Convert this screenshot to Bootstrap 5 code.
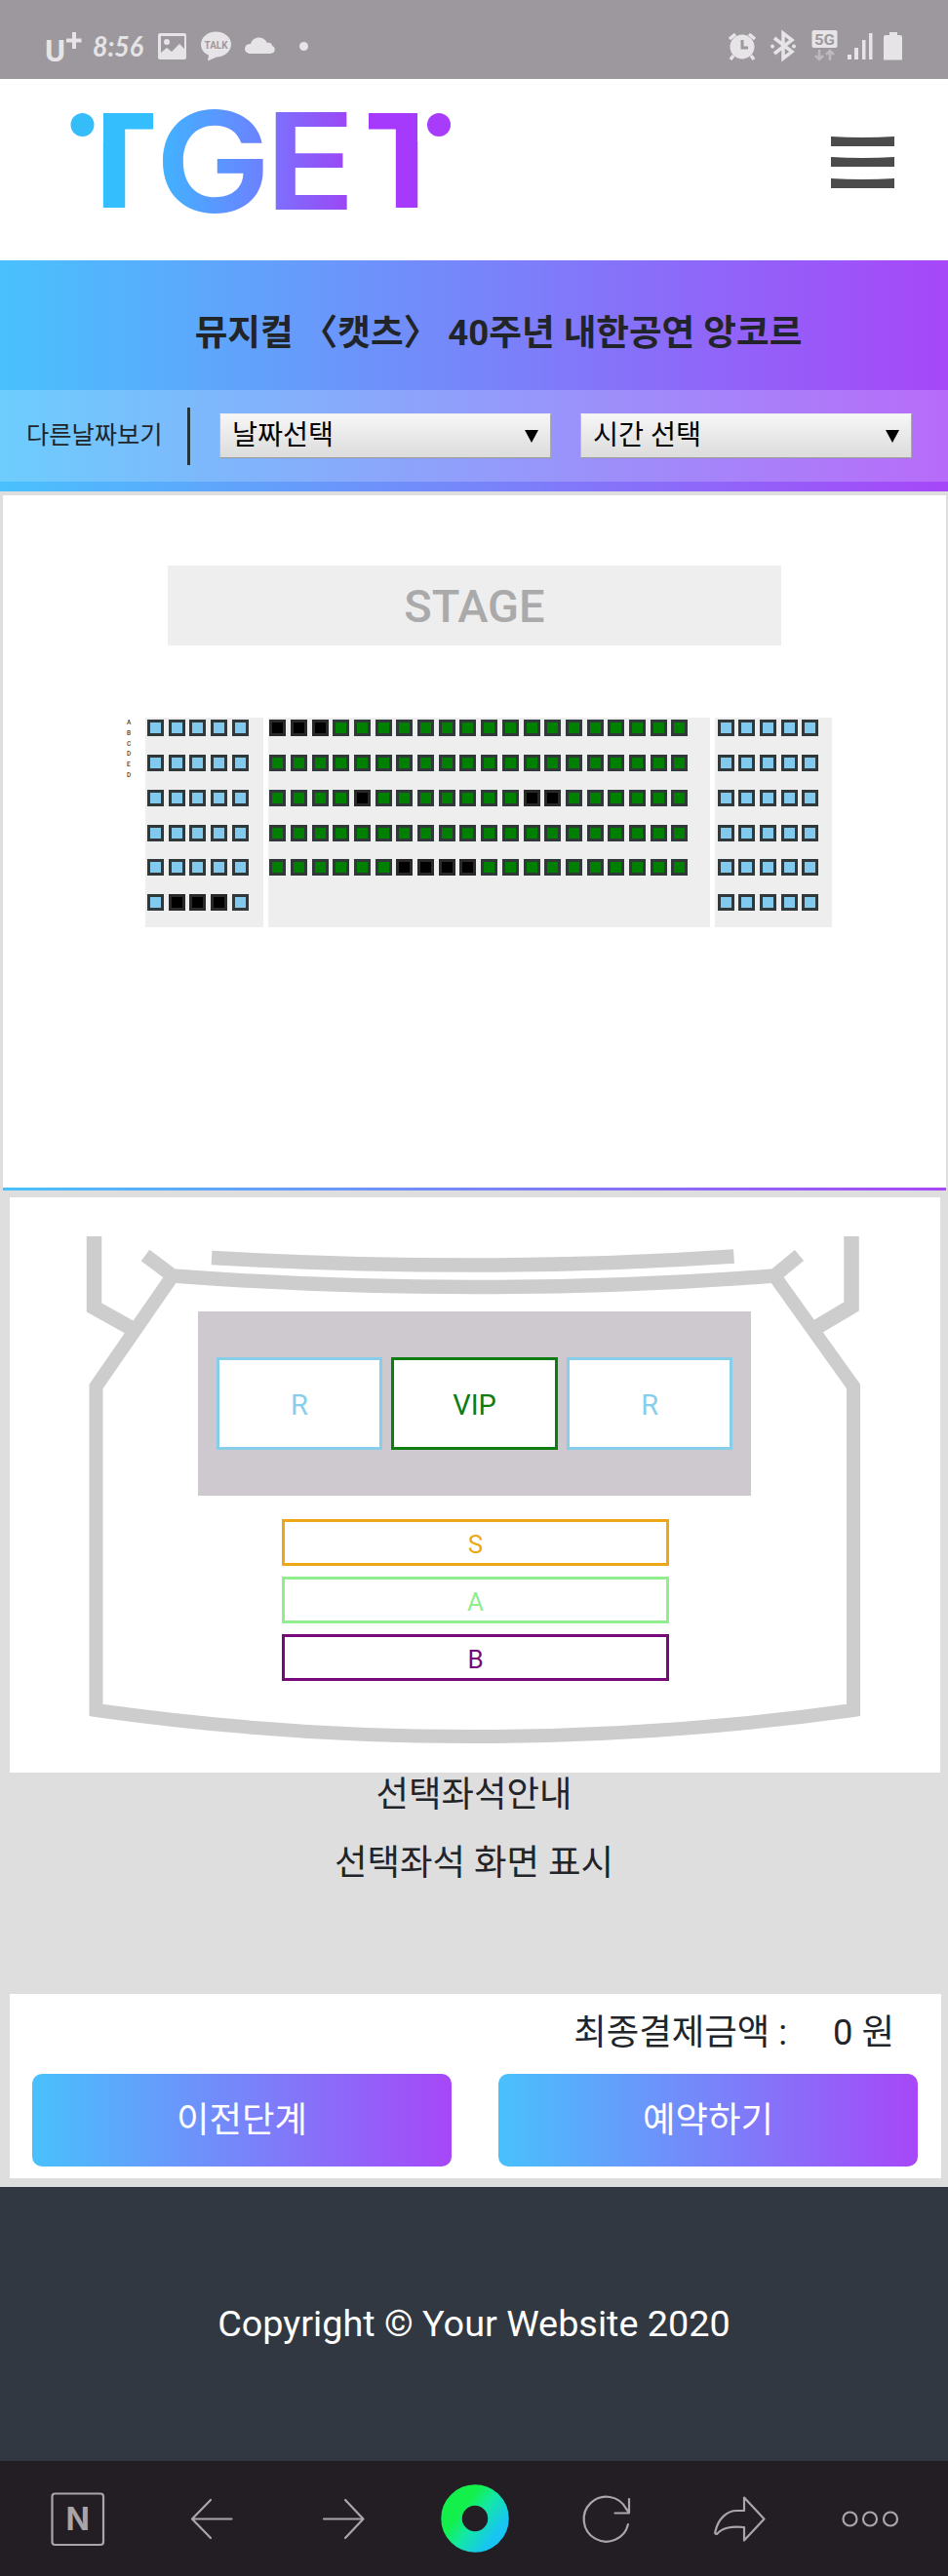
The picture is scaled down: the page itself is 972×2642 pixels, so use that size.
<!DOCTYPE html>
<html lang="ko">
<head>
<meta charset="utf-8">
<meta name="viewport" content="width=device-width, initial-scale=1">
<title>TGET</title>
<link href="https://cdn.jsdelivr.net/npm/bootstrap@5.3.0/dist/css/bootstrap.min.css" rel="stylesheet">
<style>
:root{--tget:linear-gradient(to right,#49c1fd,#7785fa 50%,#a747f8)}
body{font-family:Roboto,"Noto Sans CJK KR",sans-serif;font-size:36.4px;line-height:1;color:#212529;background:#dedede}
svg{display:block}
.status-bar{height:81px;background:#9d989d}
.site-header{height:186px;padding:0 55px 0 70px;background:#fff}
.menu-btn{margin-top:59px;height:53px}
.hero{height:237px;background:var(--tget);padding-bottom:10px}
.hero-title{height:133px;padding:16px 0 0 50px;font-size:36.6px;font-weight:700;margin:0}
.filters{height:94px;background:rgba(255,255,255,.2);padding-left:27px}
.filters .other{width:167.5px;height:59px;font-size:25.3px;border-right:3px solid #24343c;margin-right:30.5px}
.picker{width:340px;height:46px;margin-right:30px;padding:0 12px;font-size:28.3px;color:#000;border:1px solid #999;border-color:#eee #aaa #999 #bbb;background:linear-gradient(#f6f6f6,#dcdcdc)}
.seat-panel{margin:4px 2px 0 3px;height:713px;background:#fff;padding-top:72px;border-bottom:3px solid;border-image:var(--tget) 1}
.stage{width:629px;height:82px;margin-left:169px;padding-top:1px;background:#eee;color:#aaa;font-size:47px;font-weight:500}
.seating{margin:74px 0 0 127px}
.row-names{width:18.5px;font-size:6.5px;line-height:10.8px;color:#444;font-weight:500}
.block{display:grid;align-content:start;height:214.5px;background:#eee;grid-auto-rows:35.75px;padding:2.3px 0 0 2.5px}
.block.side{width:121.5px;grid-template-columns:repeat(5,21.7px)}
.block.side:last-child{width:120px}
.block.mid{width:453px;grid-template-columns:repeat(20,21.7px);margin:0 5px;padding-left:1.3px}
.block i{width:17px;height:17px;border:3px solid #30383a;background:#81caee}
.block.mid i{background:#008000}
.block i.sold{background:#000;border-color:#292929}
.hall{margin:7px 8px 0 10px;height:590px;background:#fff;position:relative}
.hall>svg{position:absolute;inset:0}
.hall-zones{position:relative;padding-top:117px}
.premium{width:567px;height:189px;margin-left:193px;background:#cec9ce;gap:9px}
.zone{background:#fff;border:3px solid;font-size:29px}
.premium .zone{width:170.6px;height:95px;padding-top:3px}
.zone.wide{width:397px;height:48px;margin:0 0 11px 279px;font-size:26px;padding-top:3px}
.z-r{color:#87ceeb}.z-vip{color:#0d7d12}.z-s{color:#eda715}.z-a{color:#90ee90}.z-b{color:#750a78}
.guide{height:227px;padding-top:5px;line-height:36px}
.guide p{margin:0 0 34px}
.checkout{margin:0 7px 9px 10px;height:189px;background:#fff;padding:0 24px 0 23px}
.total{height:82px;padding:0 24px 1px 0}
.total span{margin-right:47px}
.btn-tget{width:430px;height:95px;border:0;border-radius:10px;background:var(--tget);color:#fff;font-size:36.4px;padding:1px 0 0}
.btn-tget:hover{color:#fff}
.site-footer{height:281px;background:#323841;color:#fff;font-size:37.8px}
.browser-bar{height:118px;background:#231e23}
</style>
</head>
<body>
<div class="status-bar d-flex justify-content-between">
  <svg width="330" height="81" fill="#e6e4e6">
    <g fill="none" stroke="#e6e4e6" stroke-width="4"><path d="M76 33v17M68 41.500h15.500"/></g>
    <text x="46" y="62.500" font-family="Roboto" font-size="32" font-weight="700" textLength="21" lengthAdjust="spacingAndGlyphs">U</text>
    <text x="95" y="58" font-family="Lato" font-size="29" font-weight="700" font-style="italic" textLength="52" lengthAdjust="spacingAndGlyphs">8:56</text>
    <path fill-rule="evenodd" d="M164 34h25a2 2 0 0 1 2 2v23a2 2 0 0 1-2 2h-25a2 2 0 0 1-2-2V36a2 2 0 0 1 2-2Zm1 3v17l6-5 5 4 8-8 5 5V37Z"/><circle cx="171" cy="43" r="3"/>
    <path d="M221.500 32.500c9 0 15.500 6 15.500 13s-7 13-15 13l-9 4 1-6c-5-2-8-6-8-11 0-7 6.500-13 15.500-13Z"/>
    <text x="209.500" y="50" font-family="Roboto" font-size="11.500" font-weight="700" fill="#9d989d" textLength="24" lengthAdjust="spacingAndGlyphs">TALK</text>
    <path d="M257 55c-8 0-8-10 0-10 2-8 13-9 17-1 3-1 5 1 5 3 4 1 4 8-2 8Z"/>
    <circle cx="311.500" cy="47.500" r="4.500"/>
  </svg>
  <svg width="232" height="81" viewBox="740 0 232 81" fill="#e6e4e6">
    <circle cx="761" cy="48" r="12.500"/><g stroke="#e6e4e6" stroke-width="3.500" fill="none"><path d="m748 40 6-5M774 40l-6-5M752 57l-3 4M770 57l3 4"/></g><path d="M761 41v8h6" fill="none" stroke="#9d989d" stroke-width="3"/>
    <path d="m794 39 18 14-9 7V34l9 7-18 14" fill="none" stroke="#e6e4e6" stroke-width="3.500"/><circle cx="792" cy="47.500" r="2"/><circle cx="814" cy="47.500" r="2"/>
    <rect x="832.500" y="31" width="26" height="18" rx="2"/><text x="835" y="45.500" font-family="Roboto" font-size="15.500" font-weight="700" fill="#9d989d" textLength="21" lengthAdjust="spacingAndGlyphs">5G</text>
    <path d="M840 51v10m-4-4 4 4 4-4M851 62V52m-4 4 4-4 4 4" fill="none" stroke="#bdb9bd" stroke-width="2.500"/>
    <path d="M869 56h4v5h-4zM876 49h4v12h-4zM884 41h3.500v20H884zM891 34h3.500v27H891z"/>
    <path d="M912 33h8v3h3q2 0 2 2v23.500h-19V38q0-2 2-2h4z"/>
  </svg>
</div>

<header class="site-header d-flex justify-content-between align-items-start">
  <svg width="410" height="186" viewBox="70 81 410 186" role="img" aria-label="TGET">
    <defs>
      <linearGradient id="g1"><stop stop-color="#3eb6ff"/><stop offset="1" stop-color="#707dff"/></linearGradient>
      <linearGradient id="g2"><stop stop-color="#7875ff"/><stop offset="1" stop-color="#9f43f3"/></linearGradient>
    </defs>
    <g font-family="Inter" font-weight="600">
      <text x="67" y="213" font-size="134" font-weight="700" fill="#34befe" textLength="100" lengthAdjust="spacingAndGlyphs">T</text>
      <path d="M60 105h46v40H60zM157 105h8v40h-8z" fill="#fff"/>
      <circle cx="84.500" cy="128" r="12" fill="#35bdf9"/>
      <text x="367" y="213" font-size="134" font-weight="700" fill="#a53afd" textLength="100" lengthAdjust="spacingAndGlyphs">T</text>
      <path d="M364 105h14v40h-14zM428 105h46v40h-46z" fill="#fff"/>
      <circle cx="450" cy="128" r="12" fill="#a83cfb"/>
      <text x="159" y="217.500" font-size="144" fill="url(#g1)" textLength="119" lengthAdjust="spacingAndGlyphs">G</text>
      <text x="271.500" y="215" font-size="137" fill="url(#g2)" textLength="93" lengthAdjust="spacingAndGlyphs">E</text>
    </g>
  </svg>
  <button class="menu-btn btn p-0 border-0 rounded-0" aria-label="menu"><svg width="65" height="53" fill="#4b4b4b"><path d="M0 0q32 2 65 0v10H0zM0 21q32 2 65 0v10H0zM0 43q32 2 65 0v10H0z"/></svg></button>
</header>

<section class="hero">
  <h1 class="hero-title d-flex align-items-center justify-content-center">뮤지컬 〈캣츠〉 40주년 내한공연 앙코르</h1>
  <div class="filters d-flex align-items-center">
    <div class="other d-flex align-items-center">다른날짜보기</div>
    <div class="picker d-flex align-items-center justify-content-between">날짜선택<svg width="14" height="13"><path d="M0 0h14L7 13z"/></svg></div>
    <div class="picker d-flex align-items-center justify-content-between me-0">시간 선택<svg width="14" height="13"><path d="M0 0h14L7 13z"/></svg></div>
  </div>
</section>

<section class="seat-panel">
  <div class="stage d-flex align-items-center justify-content-center">STAGE</div>
  <div class="seating d-flex">
    <div class="row-names">A<br>B<br>C<br>D<br>E<br>D</div>
    <div class="block side" data-rows="6" data-cols="5" data-sold="26,27,28"></div>
    <div class="block mid" data-rows="5" data-cols="20" data-sold="0,1,2,44,52,53,86,87,88,89"></div>
    <div class="block side" data-rows="6" data-cols="5" data-sold=""></div>
  </div>
</section>

<section class="hall">
  <svg width="954" height="590" viewBox="10 1228 954 590" fill="none" stroke="#cdcdcd" stroke-width="14.500">
    <path d="M217 1290Q350 1297.500 486 1297.500T752.500 1288.500"/>
    <path d="M149 1287.500 177 1308.500Q330 1320 486 1320T794 1308.500L819.500 1287.500"/>
    <path d="M177 1308.500 98.500 1422V1754Q290 1781 486 1781T875 1754V1422L794 1308.500" stroke-width="14"/>
    <path d="M96.500 1268V1341L136 1363M873 1268V1340L836 1362" stroke-width="15.500"/>
  </svg>
  <div class="hall-zones">
    <div class="premium d-flex align-items-center justify-content-center">
      <div class="zone z-r d-flex align-items-center justify-content-center">R</div>
      <div class="zone z-vip d-flex align-items-center justify-content-center">VIP</div>
      <div class="zone z-r d-flex align-items-center justify-content-center">R</div>
    </div>
    <div class="pt-4">
      <div class="zone wide z-s d-flex align-items-center justify-content-center">S</div>
      <div class="zone wide z-a d-flex align-items-center justify-content-center">A</div>
      <div class="zone wide z-b d-flex align-items-center justify-content-center">B</div>
    </div>
  </div>
</section>

<section class="guide text-center"><p>선택좌석안내</p><p>선택좌석 화면 표시</p></section>

<section class="checkout">
  <div class="total d-flex align-items-center justify-content-end"><span>최종결제금액 :</span>0 원</div>
  <div class="d-flex justify-content-between">
    <button class="btn btn-tget">이전단계</button>
    <button class="btn btn-tget">예약하기</button>
  </div>
</section>

<footer class="site-footer d-flex align-items-center justify-content-center">Copyright © Your Website 2020</footer>

<nav class="browser-bar">
  <svg width="972" height="118" viewBox="0 2524 972 118" fill="none" stroke="#a9a5a9" stroke-width="2.200" stroke-linecap="round" stroke-linejoin="round">
    <defs><linearGradient id="ring" x1=".1" y1=".2" x2=".95" y2=".85"><stop offset=".15" stop-color="#13f04c"/><stop offset=".5" stop-color="#13e8a4"/><stop offset="1" stop-color="#18c4f4"/></linearGradient></defs>
    <rect x="53.500" y="2557.500" width="52.500" height="52.500" rx="3"/>
    <text x="79.700" y="2595" text-anchor="middle" font-family="Inter" font-size="32" font-weight="700" fill="#a9a5a9" stroke="none">N</text>
    <path d="M237.500 2583.500h-40M216 2564l-19 19.500 19 19.500"/>
    <path d="M332 2583.500h40M354 2564l18.500 19.500-18.500 19.500"/>
    <circle cx="487" cy="2583" r="24" stroke="url(#ring)" stroke-width="21.500"/>
    <path d="M644 2589a23 23 0 1 1-2-16l3 4V2563M645 2577.500h-14.500"/>
    <path d="M763 2561.500l20.500 22-20.500 22V2592c-13-1-22 0-28 7-2 0-2-1-1.500-3 3-13 12-21 22-21h7.500Z"/>
    <circle cx="871.500" cy="2583.500" r="7"/><circle cx="892" cy="2583.500" r="7"/><circle cx="913" cy="2583.500" r="7"/>
  </svg>
</nav>

<script src="https://cdn.jsdelivr.net/npm/bootstrap@5.3.0/dist/js/bootstrap.bundle.min.js"></script>
<script>
// Fill every block with its seats; data-sold lists the indexes already taken.
document.querySelectorAll('.block').forEach(function (b) {
  var sold = b.dataset.sold.split(',');
  for (var i = 0; i < b.dataset.rows * b.dataset.cols; i++) {
    var seat = document.createElement('i');
    if (sold.indexOf(String(i)) >= 0) seat.className = 'sold';
    b.appendChild(seat);
  }
});
</script>
</body>
</html>
